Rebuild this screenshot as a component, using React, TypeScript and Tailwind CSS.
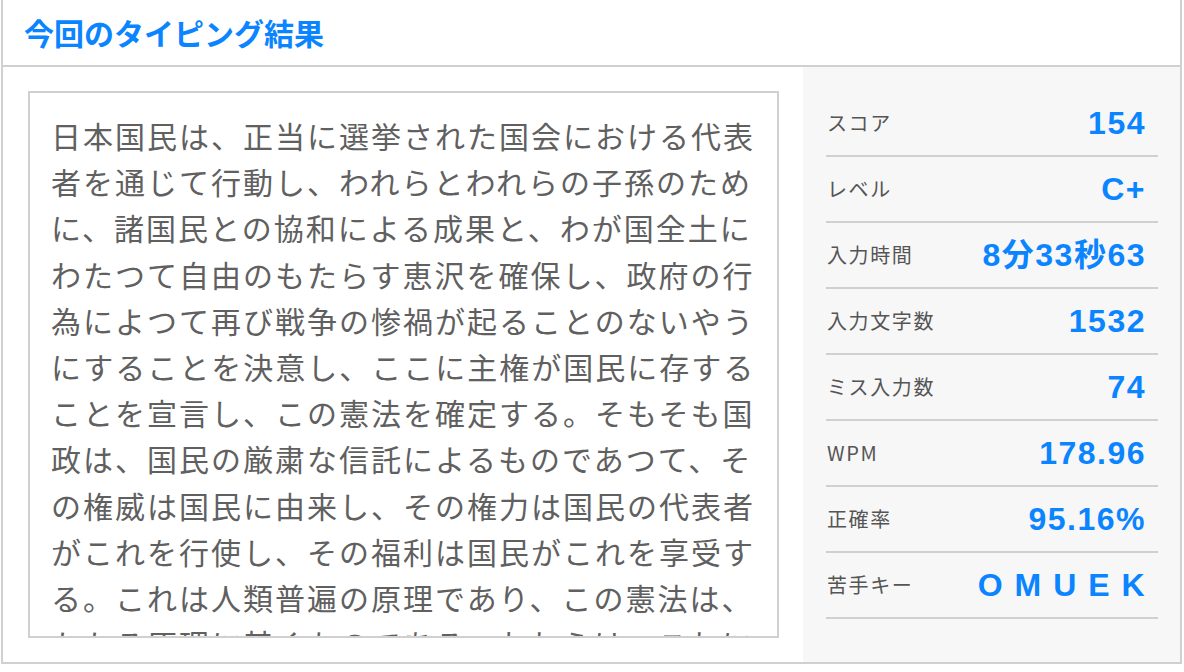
import React from "react";

const lines = [
  "日本国民は、正当に選挙された国会における代表",
  "者を通じて行動し、われらとわれらの子孫のため",
  "に、諸国民との協和による成果と、わが国全土に",
  "わたつて自由のもたらす恵沢を確保し、政府の行",
  "為によつて再び戦争の惨禍が起ることのないやう",
  "にすることを決意し、ここに主権が国民に存する",
  "ことを宣言し、この憲法を確定する。そもそも国",
  "政は、国民の厳粛な信託によるものであつて、そ",
  "の権威は国民に由来し、その権力は国民の代表者",
  "がこれを行使し、その福利は国民がこれを享受す",
  "る。これは人類普遍の原理であり、この憲法は、",
  "かかる原理に基くものである。われらは、これに",
];

const stats: [string, string][] = [
  ["スコア", "154"],
  ["レベル", "C+"],
  ["入力時間", "8分33秒63"],
  ["入力文字数", "1532"],
  ["ミス入力数", "74"],
  ["WPM", "178.96"],
  ["正確率", "95.16%"],
  ["苦手キー", "O M U E K"],
];

export default function App() {
  return (
    <div className="w-[1184px] h-[672px] bg-white overflow-hidden pl-[1px]">
      <div className="w-[1181px] h-[664px] border-2 border-t-0 border-[#d0d0d0] flex flex-col">
        <div
          className="h-[67px] shrink-0 border-b-2 border-[#d0d0d0] flex items-center pl-[21px] text-[30px] font-bold text-[#0a84ff]"
          style={{ fontFamily: '"Noto Sans CJK JP", sans-serif' }}
        >
          今回のタイピング結果
        </div>
        <div className="flex flex-1 min-h-0">
          <div className="w-[800px] shrink-0 pt-[24px] pb-[24px] pl-[25px] pr-[24px]">
            <div
              className="h-full border-2 border-[#d0d0d0] overflow-hidden pt-[19px] pl-[21px] text-[30px] leading-[46.2px] tracking-[2px] text-[#606060]"
              style={{ fontFamily: '"Noto Sans CJK JP", sans-serif' }}
            >
              {lines.map((l, i) => (
                <div key={i} className="whitespace-nowrap">
                  {l}
                </div>
              ))}
            </div>
          </div>
          <div className="flex-1 bg-[#f7f7f7] pt-[24px] pl-[23px] pr-[22px]">
            {stats.map(([label, value]) => (
              <div
                key={label}
                className="h-[66px] border-b-2 border-[#d0d0d0] flex items-center justify-between pl-[1px] pr-[12px]"
              >
                <span
                  className="text-[20px] tracking-[1.6px] text-[#555555]"
                  style={{ fontFamily: '"Noto Sans CJK JP", sans-serif' }}
                >
                  {label}
                </span>
                <span
                  className="text-[32px] font-bold tracking-[1.5px] text-[#0a84ff] whitespace-pre"
                  style={{ fontFamily: '"Liberation Sans", "Noto Sans CJK JP", sans-serif' }}
                >
                  {value}
                </span>
              </div>
            ))}
          </div>
        </div>
      </div>
    </div>
  );
}
